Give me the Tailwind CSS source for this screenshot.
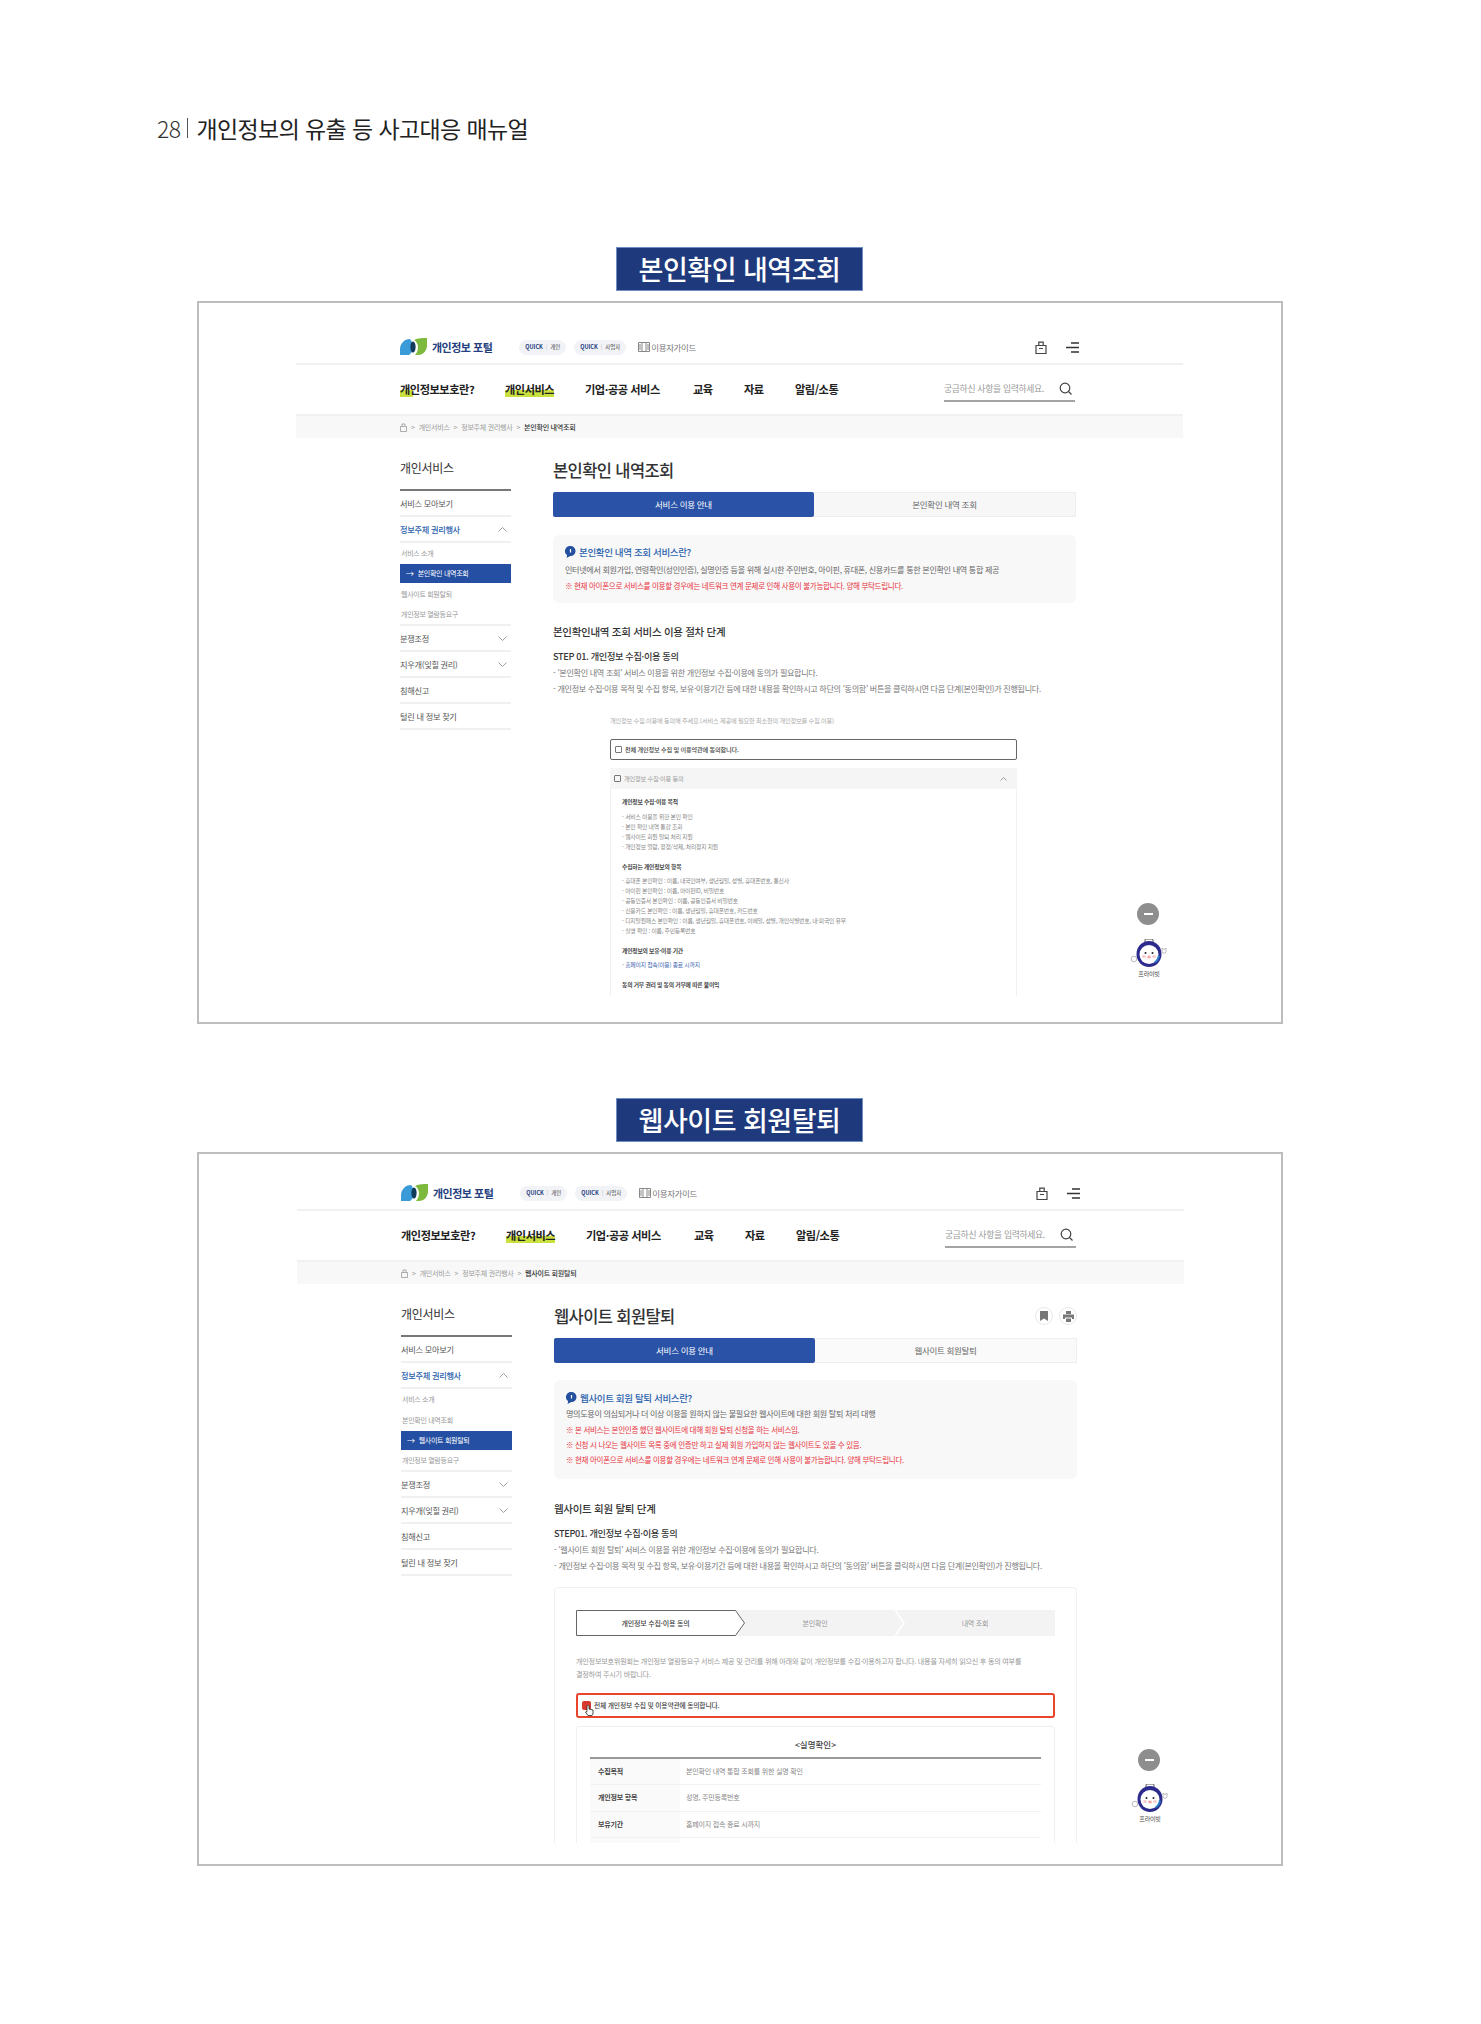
<!DOCTYPE html>
<html lang="ko">
<head>
<meta charset="UTF-8">
<meta name="viewport" content="width=device-width, initial-scale=1.0">
<title>개인정보의 유출 등 사고대응 매뉴얼</title>
<script src="https://cdn.jsdelivr.net/npm/@tailwindcss/browser@4"></script>
</head>
<body class="bg-white font-['Noto_Sans_CJK_KR','Noto_Sans',sans-serif] text-[#333]">
<div class="w-[1481px] h-[2024px] overflow-hidden">

  <!-- page heading -->
  <div class="h-[247px] pl-[157px] pt-[112px]">
    <p class="flex items-center h-[32px] text-[23px] tracking-[-0.6px] text-[#222]"><span class="font-light text-[#333]">28</span><span class="w-px h-[20px] bg-[#555] ml-[7px] mr-[8px]"></span><span>개인정보의 유출 등 사고대응 매뉴얼</span></p>
  </div>

  <!-- section 1 -->
  <div class="ml-[616px] w-[247px] h-[44px] flex items-center justify-center bg-[#1f3a7c] border border-[#6f8fc4] text-white text-[27px] font-medium tracking-[-0.5px]">본인확인 내역조회</div>
  <div class="relative mt-[10px] ml-[197px] w-[1086px] h-[723px] border-2 border-[#bdbdbd] overflow-hidden">
    <div class="ml-[97px] w-[887px]">
      <!-- top bar -->
      <div class="h-[62px] pt-[32px] pl-[104px] pr-[104px] border-b-2 border-[#f1f1f1]">
        <div class="flex items-center h-[24px]">
          <svg class="w-[27px] h-[18px]" viewBox="0 0 27 18"><path d="M10 1C4 1 0 6 0 11v6h9c3-2 4-5 4-8s-1-6-3-8z" fill="#3a9bd8"/><path d="M27 0v7c0 6-4 10-9 10h-3c2-2 3-5 3-8 0-3-2-6-4-7 4-2 9-2 13-2z" fill="#7cb93c"/><ellipse cx="13" cy="9" rx="2.600" ry="5.500" fill="#123a5a"/></svg>
          <span class="ml-[5px] text-[11px] font-bold tracking-[-0.5px] text-[#24407e]">개인정보 포털</span>
          <span class="ml-[27px] flex items-center justify-center w-[47px] h-[15px] rounded-full bg-[#f2f3f6] text-[5.5px] text-[#444]"><b class="text-[#24407e]">QUICK</b><span class="mx-[3px] text-[#bbb]">|</span>개인</span>
          <span class="ml-[8px] flex items-center justify-center w-[52px] h-[15px] rounded-full bg-[#f2f3f6] text-[5.5px] text-[#444]"><b class="text-[#24407e]">QUICK</b><span class="mx-[3px] text-[#bbb]">|</span>사업자</span>
          <svg class="ml-[12px] w-[12px] h-[10px]" viewBox="0 0 12 10" fill="none" stroke="#888" stroke-width="1"><path d="M.5.5h11v9H.5zM4 .5v9M8 .5v9M1 3h2M1 5h2M1 7h2M9 3h2M9 5h2M9 7h2"/></svg>
          <span class="ml-px text-[8.5px] tracking-[-0.4px] text-[#777]">이용자가이드</span>
          <svg class="ml-auto w-[12px] h-[13px]" viewBox="0 0 12 13" fill="none" stroke="#444" stroke-width="1.2"><path d="M1 4.500h10v8H1zM3.800 4.500V1.200h4.400v3.300M4 7.500h4"/></svg>
          <svg class="ml-[19px] w-[13px] h-[11px]" viewBox="0 0 13 11" fill="none" stroke="#333" stroke-width="1.3"><path d="M5 1h8M0 5.500h13M5 10h8"/></svg>
        </div>
      </div>
      <!-- main nav -->
      <div class="h-[49px] pl-[104px] pr-[108px] flex items-center text-[11.2px] font-bold tracking-[-0.45px] text-[#222]">
        <span class="w-[105px]"><span class="bg-[linear-gradient(90deg,#c9e03e_13px,transparent_13px)] bg-[length:100%_45%] bg-bottom bg-no-repeat">개인정보보호란?</span></span>
        <span class="w-[80px]"><span class="bg-[linear-gradient(#c9e03e,#c9e03e)] bg-[length:100%_45%] bg-bottom bg-no-repeat">개인서비스</span></span>
        <span class="w-[108px]">기업·공공 서비스</span>
        <span class="w-[51px]">교육</span>
        <span class="w-[51px]">자료</span>
        <span>알림/소통</span>
        <div class="ml-auto w-[131px] h-[25px] flex items-center border-b-2 border-[#a3a3a3]">
          <span class="text-[8.8px] font-normal tracking-[-0.3px] text-[#999]">궁금하신 사항을 입력하세요.</span>
          <svg class="ml-auto mr-[3px] w-[13px] h-[13px]" viewBox="0 0 13 13" fill="none" stroke="#444" stroke-width="1.2"><circle cx="6" cy="6" r="4.800"/><path d="M9.500 9.500l3 3"/></svg>
        </div>
      </div>
      <!-- breadcrumb -->
      <div class="h-[24px] pl-[104px] flex items-center bg-[#f8f8f8] border-t-2 border-[#f1f1f1] text-[7px] tracking-[-0.25px] text-[#999]">
        <svg class="w-[7px] h-[9px]" viewBox="0 0 7 9" fill="none" stroke="#999" stroke-width=".8"><path d="M.5 3.500h6v5h-6zM2 3.500V1h3v2.500"/></svg>
        <span class="mx-[4px]">&gt;</span><span>개인서비스</span><span class="mx-[4px]">&gt;</span><span>정보주체 권리행사</span><span class="mx-[4px]">&gt;</span><b class="font-medium text-[#333]">본인확인 내역조회</b>
      </div>
      <!-- body -->
      <div class="h-[558px] pl-[104px] flex overflow-hidden">
        <aside class="w-[111px] shrink-0 text-[8.2px] tracking-[-0.3px] text-[#555]">
          <div class="h-[53px] pt-[21px] border-b-2 border-[#777]"><p class="h-[18px] leading-[18px] text-[12px] text-[#333]">개인서비스</p></div>
          <div class="h-[26px] flex items-center border-b-2 border-[#f0f0f0]">서비스 모아보기</div>
          <div class="h-[26px] flex items-center justify-between border-b-2 border-[#f0f0f0] font-medium text-[#2b62ad]">정보주체 권리행사<svg class="mr-[4px] w-[9px] h-[5px]" viewBox="0 0 9 5" fill="none" stroke="#888" stroke-width=".8"><path d="M.5 4.500l4-4 4 4"/></svg></div>
          <div class="pl-px border-b-2 border-[#f0f0f0] text-[7px] text-[#999]">
            <div class="h-[21px] flex items-center">서비스 소개</div>
            <div class="-ml-px h-[19px] flex items-center pl-[6px] gap-[4px] bg-[#244fa2] text-white"><span class="text-[8px]">→</span>본인확인 내역조회</div>
            <div class="h-[22px] flex items-center">웹사이트 회원탈퇴</div>
            <div class="h-[19px] flex items-center">개인정보 열람등요구</div>
          </div>
          <div class="h-[26px] flex items-center justify-between border-b-2 border-[#f0f0f0]">분쟁조정<svg class="mr-[4px] w-[9px] h-[5px]" viewBox="0 0 9 5" fill="none" stroke="#888" stroke-width=".8"><path d="M.5.5l4 4 4-4"/></svg></div>
          <div class="h-[26px] flex items-center justify-between border-b-2 border-[#f0f0f0]">지우개(잊힐 권리)<svg class="mr-[4px] w-[9px] h-[5px]" viewBox="0 0 9 5" fill="none" stroke="#888" stroke-width=".8"><path d="M.5.5l4 4 4-4"/></svg></div>
          <div class="h-[26px] flex items-center border-b-2 border-[#f0f0f0]">침해신고</div>
          <div class="h-[26px] flex items-center border-b-2 border-[#f0f0f0]">털린 내 정보 찾기</div>
        </aside>
        <main class="ml-[42px] w-[523px] shrink-0">
          <h1 class="h-[54px] pt-[20px] leading-[24px] text-[16.5px] font-medium tracking-[-0.6px] text-[#333]">본인확인 내역조회</h1>
          <div class="flex h-[25px] text-[8.5px] tracking-[-0.3px]">
            <div class="w-[261px] flex items-center justify-center rounded-[2px] bg-[#2a53a8] text-white">서비스 이용 안내</div>
            <div class="flex-1 flex items-center justify-center bg-[#f7f7f7] border-y border-r border-[#eee] text-[#666]">본인확인 내역 조회</div>
          </div>
          <div class="mt-[18px] h-[68px] pt-[10px] pl-[12px] rounded-[6px] bg-[#f8f8f8]">
            <p class="flex items-center h-[14px] text-[9.5px] font-medium tracking-[-0.35px] text-[#2b62ad]"><svg class="mr-[3px] w-[11px] h-[12px]" viewBox="0 0 11 12"><path d="M5.500 0a5 5 0 015 5c0 3-2.500 5-5 5-1 0-2 1-4 2 .5-1 .5-2 .5-3A5 5 0 015.500 0z" fill="#24509f"/><path d="M5.500 3v3.500" stroke="#fff" stroke-width="1.200"/></svg>본인확인 내역 조회 서비스란?</p>
            <p class="mt-[3px] h-[16px] leading-[16px] text-[8.1px] tracking-[-0.34px] text-[#666]">인터넷에서 회원가입, 연령확인(성인인증), 실명인증 등을 위해 실시한 주민번호, 아이핀, 휴대폰, 신용카드를 통한 본인확인 내역 통합 제공</p>
            <p class="h-[16px] leading-[16px] text-[7.5px] tracking-[-0.3px] text-[#e8323c]">※ 현재 아이폰으로 서비스를 이용할 경우에는 네트워크 연계 문제로 인해 사용이 불가능합니다. 양해 부탁드립니다.</p>
          </div>
          <h2 class="mt-[21px] h-[16px] leading-[16px] text-[10.5px] font-medium tracking-[-0.3px] text-[#333]">본인확인내역 조회 서비스 이용 절차 단계</h2>
          <h3 class="mt-[8px] h-[16px] leading-[16px] text-[9.2px] font-medium tracking-[-0.35px] text-[#333]">STEP 01. 개인정보 수집·이용 동의</h3>
          <p class="mt-px h-[16px] leading-[16px] text-[8.1px] tracking-[-0.33px] text-[#777]">- '본인확인 내역 조회' 서비스 이용을 위한 개인정보 수집·이용에 동의가 필요합니다.</p>
          <p class="h-[16px] leading-[16px] text-[8.1px] tracking-[-0.33px] whitespace-nowrap text-[#777]">- 개인정보 수집·이용 목적 및 수집 항목, 보유·이용기간 등에 대한 내용을 확인하시고 하단의 '동의함' 버튼을 클릭하시면 다음 단계(본인확인)가 진행됩니다.</p>
          <div class="ml-[57px] w-[407px]">
            <p class="mt-[17px] h-[14px] leading-[14px] text-[6.2px] tracking-[-0.2px] text-[#aaa]">개인정보 수집.이용에 동의해 주세요.(서비스 제공에 필요한 최소한의 개인정보를 수집.이용)</p>
            <div class="mt-[11px] h-[21px] flex items-center px-[4px] gap-[3px] border border-[#666] rounded-[2px] text-[6.2px] font-medium tracking-[-0.2px] text-[#444]"><span class="w-[7px] h-[7px] border border-[#777] rounded-[1px]"></span>전체 개인정보 수집 및 이용약관에 동의합니다.</div>
            <div class="mt-[8px] h-[21px] flex items-center px-[4px] gap-[3px] bg-[#f5f5f5] text-[6.2px] tracking-[-0.2px] text-[#999]"><span class="w-[7px] h-[7px] border border-[#777] rounded-[1px]"></span>개인정보 수집·이용 동의<svg class="ml-auto mr-[6px] w-[7px] h-[4px]" viewBox="0 0 7 4" fill="none" stroke="#888" stroke-width=".8"><path d="M.5 3.500l3-3 3 3"/></svg></div>
            <div class="h-[220px] px-[11px] pt-[8px] border-x border-[#f0f0f0] text-[5.8px] leading-[10px] tracking-[-0.2px] text-[#888]">
              <p class="font-bold text-[#444]">개인정보 수집·이용 목적</p>
              <ul class="mt-[5px]"><li>- 서비스 이용을 위한 본인 확인</li><li>- 본인 확인 내역 통합 조회</li><li>- 웹사이트 회원 탈퇴 처리 지원</li><li>- 개인정보 열람, 정정/삭제, 처리정지 지원</li></ul>
              <p class="mt-[10px] font-bold text-[#444]">수집하는 개인정보의 항목</p>
              <ul class="mt-[4px]"><li>- 휴대폰 본인확인 : 이름, 내국인여부, 생년월일, 성별, 휴대폰번호, 통신사</li><li>- 아이핀 본인확인 : 이름, 아이핀ID, 비밀번호</li><li>- 공동인증서 본인확인 : 이름, 공동인증서 비밀번호</li><li>- 신용카드 본인확인 : 이름, 생년월일, 휴대폰번호, 카드번호</li><li>- 디지털원패스 본인확인 : 이름, 생년월일, 휴대폰번호, 이메일, 성별, 개인식별번호, 내·외국인 유무</li><li>- 실명 확인 : 이름, 주민등록번호</li></ul>
              <p class="mt-[10px] font-bold text-[#444]">개인정보의 보유·이용 기간</p>
              <p class="mt-[4px] text-[#3a5fae]">- 홈페이지 접속(이용) 종료 시까지</p>
              <p class="mt-[10px] font-bold text-[#444]">동의 거부 권리 및 동의 거부에 따른 불이익</p>
            </div>
          </div>
        </main>
      </div>
    </div>
    <!-- floating widgets -->
    <div class="absolute left-[938px] top-[600px] w-[22px] h-[22px] rounded-full bg-[#8e8e8e] flex items-center justify-center"><span class="w-[9px] h-[2px] bg-white"></span></div>
    <div class="absolute left-[930px] top-[636px] w-[40px] flex flex-col items-center">
      <svg class="w-[38px] h-[29px]" viewBox="0 0 38 29"><rect x="15" y="0" width="8" height="4" rx="1" fill="none" stroke="#555" stroke-width="1"/><ellipse cx="19" cy="15" rx="12.500" ry="13" fill="#2c2a8c"/><circle cx="19" cy="15.500" r="9.500" fill="#fff"/><path d="M25 24a9 9 0 005-7l-2-1a10 10 0 01-4 7z" fill="#2a78c8"/><circle cx="15.500" cy="14" r="1" fill="#222"/><circle cx="22.500" cy="14" r="1" fill="#222"/><ellipse cx="14" cy="17.500" rx="2" ry="1.300" fill="#f9c6c6"/><ellipse cx="24" cy="17.500" rx="2" ry="1.300" fill="#f9c6c6"/><ellipse cx="19" cy="18" rx="1.800" ry="1.400" fill="#f5a5a5"/><circle cx="4" cy="20" r="2.800" fill="#fff" stroke="#aaa" stroke-width=".8"/><path d="M32 9l1 1.200h2l1-1.200v4a2.200 2.200 0 01-4 0z" fill="#fff" stroke="#aaa" stroke-width=".8"/></svg>
      <span class="text-[6px] leading-[12px] tracking-[-0.2px] text-[#444]">프라이빗</span>
    </div>
  </div>

  <!-- section 2 -->
  <div class="mt-[74px] ml-[616px] w-[247px] h-[44px] flex items-center justify-center bg-[#1f3a7c] border border-[#6f8fc4] text-white text-[27px] font-medium tracking-[-0.5px]">웹사이트 회원탈퇴</div>
  <div class="relative mt-[10px] ml-[197px] w-[1086px] h-[714px] border-2 border-[#bdbdbd] overflow-hidden">
    <div class="ml-[98px] w-[887px]">
      <div class="h-[57px] pt-[27px] pl-[104px] pr-[104px] border-b-2 border-[#f1f1f1]">
        <div class="flex items-center h-[24px]">
          <svg class="w-[27px] h-[18px]" viewBox="0 0 27 18"><path d="M10 1C4 1 0 6 0 11v6h9c3-2 4-5 4-8s-1-6-3-8z" fill="#3a9bd8"/><path d="M27 0v7c0 6-4 10-9 10h-3c2-2 3-5 3-8 0-3-2-6-4-7 4-2 9-2 13-2z" fill="#7cb93c"/><ellipse cx="13" cy="9" rx="2.600" ry="5.500" fill="#123a5a"/></svg>
          <span class="ml-[5px] text-[11px] font-bold tracking-[-0.5px] text-[#24407e]">개인정보 포털</span>
          <span class="ml-[27px] flex items-center justify-center w-[47px] h-[15px] rounded-full bg-[#f2f3f6] text-[5.5px] text-[#444]"><b class="text-[#24407e]">QUICK</b><span class="mx-[3px] text-[#bbb]">|</span>개인</span>
          <span class="ml-[8px] flex items-center justify-center w-[52px] h-[15px] rounded-full bg-[#f2f3f6] text-[5.5px] text-[#444]"><b class="text-[#24407e]">QUICK</b><span class="mx-[3px] text-[#bbb]">|</span>사업자</span>
          <svg class="ml-[12px] w-[12px] h-[10px]" viewBox="0 0 12 10" fill="none" stroke="#888" stroke-width="1"><path d="M.5.5h11v9H.5zM4 .5v9M8 .5v9M1 3h2M1 5h2M1 7h2M9 3h2M9 5h2M9 7h2"/></svg>
          <span class="ml-px text-[8.5px] tracking-[-0.4px] text-[#777]">이용자가이드</span>
          <svg class="ml-auto w-[12px] h-[13px]" viewBox="0 0 12 13" fill="none" stroke="#444" stroke-width="1.2"><path d="M1 4.500h10v8H1zM3.800 4.500V1.200h4.400v3.300M4 7.500h4"/></svg>
          <svg class="ml-[19px] w-[13px] h-[11px]" viewBox="0 0 13 11" fill="none" stroke="#333" stroke-width="1.3"><path d="M5 1h8M0 5.500h13M5 10h8"/></svg>
        </div>
      </div>
      <div class="h-[49px] pl-[104px] pr-[108px] flex items-center text-[11.2px] font-bold tracking-[-0.45px] text-[#222]">
        <span class="w-[105px]">개인정보보호란?</span>
        <span class="w-[80px]"><span class="bg-[linear-gradient(#c9e03e,#c9e03e)] bg-[length:100%_45%] bg-bottom bg-no-repeat">개인서비스</span></span>
        <span class="w-[108px]">기업·공공 서비스</span>
        <span class="w-[51px]">교육</span>
        <span class="w-[51px]">자료</span>
        <span>알림/소통</span>
        <div class="ml-auto w-[131px] h-[25px] flex items-center border-b-2 border-[#a3a3a3]">
          <span class="text-[8.8px] font-normal tracking-[-0.3px] text-[#999]">궁금하신 사항을 입력하세요.</span>
          <svg class="ml-auto mr-[3px] w-[13px] h-[13px]" viewBox="0 0 13 13" fill="none" stroke="#444" stroke-width="1.2"><circle cx="6" cy="6" r="4.800"/><path d="M9.500 9.500l3 3"/></svg>
        </div>
      </div>
      <div class="h-[24px] pl-[104px] flex items-center bg-[#f8f8f8] border-t-2 border-[#f1f1f1] text-[7px] tracking-[-0.25px] text-[#999]">
        <svg class="w-[7px] h-[9px]" viewBox="0 0 7 9" fill="none" stroke="#999" stroke-width=".8"><path d="M.5 3.500h6v5h-6zM2 3.500V1h3v2.500"/></svg>
        <span class="mx-[4px]">&gt;</span><span>개인서비스</span><span class="mx-[4px]">&gt;</span><span>정보주체 권리행사</span><span class="mx-[4px]">&gt;</span><b class="font-medium text-[#333]">웹사이트 회원탈퇴</b>
      </div>
      <div class="h-[559px] pl-[104px] flex overflow-hidden">
        <aside class="w-[111px] shrink-0 text-[8.2px] tracking-[-0.3px] text-[#555]">
          <div class="h-[53px] pt-[21px] border-b-2 border-[#777]"><p class="h-[18px] leading-[18px] text-[12px] text-[#333]">개인서비스</p></div>
          <div class="h-[26px] flex items-center border-b-2 border-[#f0f0f0]">서비스 모아보기</div>
          <div class="h-[26px] flex items-center justify-between border-b-2 border-[#f0f0f0] font-medium text-[#2b62ad]">정보주체 권리행사<svg class="mr-[4px] w-[9px] h-[5px]" viewBox="0 0 9 5" fill="none" stroke="#888" stroke-width=".8"><path d="M.5 4.500l4-4 4 4"/></svg></div>
          <div class="pl-px border-b-2 border-[#f0f0f0] text-[7px] text-[#999]">
            <div class="h-[21px] flex items-center">서비스 소개</div>
            <div class="h-[21px] flex items-center">본인확인 내역조회</div>
            <div class="-ml-px h-[19px] flex items-center pl-[6px] gap-[4px] bg-[#244fa2] text-white"><span class="text-[8px]">→</span>웹사이트 회원탈퇴</div>
            <div class="h-[20px] flex items-center">개인정보 열람등요구</div>
          </div>
          <div class="h-[26px] flex items-center justify-between border-b-2 border-[#f0f0f0]">분쟁조정<svg class="mr-[4px] w-[9px] h-[5px]" viewBox="0 0 9 5" fill="none" stroke="#888" stroke-width=".8"><path d="M.5.5l4 4 4-4"/></svg></div>
          <div class="h-[26px] flex items-center justify-between border-b-2 border-[#f0f0f0]">지우개(잊힐 권리)<svg class="mr-[4px] w-[9px] h-[5px]" viewBox="0 0 9 5" fill="none" stroke="#888" stroke-width=".8"><path d="M.5.5l4 4 4-4"/></svg></div>
          <div class="h-[26px] flex items-center border-b-2 border-[#f0f0f0]">침해신고</div>
          <div class="h-[26px] flex items-center border-b-2 border-[#f0f0f0]">털린 내 정보 찾기</div>
        </aside>
        <main class="ml-[42px] w-[523px] shrink-0">
          <div class="h-[54px] pt-[20px] flex items-start">
            <h1 class="leading-[24px] text-[16.5px] font-medium tracking-[-0.6px] text-[#333]">웹사이트 회원탈퇴</h1>
            <span class="ml-auto mt-[3px] w-[18px] h-[18px] rounded-full border border-[#e8e8e8] flex items-center justify-center"><svg class="w-[8px] h-[10px]" viewBox="0 0 8 10"><path d="M0 0h8v10L4 7.500 0 10z" fill="#777"/></svg></span>
            <span class="ml-[6px] mt-[3px] w-[18px] h-[18px] rounded-full border border-[#e8e8e8] flex items-center justify-center"><svg class="w-[11px] h-[11px]" viewBox="0 0 11 11"><path d="M3 0h5v3H3zM0 3.500h11v4.500H9V6.500H2V8H0zM3 7.500h5V11H3z" fill="#777"/></svg></span>
          </div>
          <div class="flex h-[25px] text-[8.5px] tracking-[-0.3px]">
            <div class="w-[261px] flex items-center justify-center rounded-[2px] bg-[#2a53a8] text-white">서비스 이용 안내</div>
            <div class="flex-1 flex items-center justify-center bg-[#fafafa] border-y border-r border-[#eee] text-[#666]">웹사이트 회원탈퇴</div>
          </div>
          <div class="mt-[17px] h-[99px] pt-[11px] pl-[12px] rounded-[6px] bg-[#f8f8f8]">
            <p class="flex items-center h-[14px] text-[9.5px] font-medium tracking-[-0.35px] text-[#2b62ad]"><svg class="mr-[3px] w-[11px] h-[12px]" viewBox="0 0 11 12"><path d="M5.500 0a5 5 0 015 5c0 3-2.500 5-5 5-1 0-2 1-4 2 .5-1 .5-2 .5-3A5 5 0 015.500 0z" fill="#24509f"/><path d="M5.500 3v3.500" stroke="#fff" stroke-width="1.200"/></svg>웹사이트 회원 탈퇴 서비스란?</p>
            <p class="mt-[1px] h-[16px] leading-[16px] text-[8.1px] tracking-[-0.34px] text-[#666]">명의도용이 의심되거나 더 이상 이용을 원하지 않는 불필요한 웹사이트에 대한 회원 탈퇴 처리 대행</p>
            <div class="text-[7.5px] leading-[15px] tracking-[-0.3px] text-[#e8323c]">
              <p>※ 본 서비스는 본인인증 했던 웹사이트에 대해 회원 탈퇴 신청을 하는 서비스임.</p>
              <p>※ 신청 시 나오는 웹사이트 목록 중에 인증만 하고 실제 회원 가입하지 않는 웹사이트도 있을 수 있음.</p>
              <p>※ 현재 아이폰으로 서비스를 이용할 경우에는 네트워크 연계 문제로 인해 사용이 불가능합니다. 양해 부탁드립니다.</p>
            </div>
          </div>
          <h2 class="mt-[22px] h-[16px] leading-[16px] text-[10.5px] font-medium tracking-[-0.3px] text-[#333]">웹사이트 회원 탈퇴 단계</h2>
          <h3 class="mt-[8px] h-[16px] leading-[16px] text-[9.2px] font-medium tracking-[-0.35px] text-[#333]">STEP01. 개인정보 수집·이용 동의</h3>
          <p class="mt-px h-[16px] leading-[16px] text-[8.1px] tracking-[-0.33px] text-[#777]">- '웹사이트 회원 탈퇴' 서비스 이용을 위한 개인정보 수집·이용에 동의가 필요합니다.</p>
          <p class="h-[16px] leading-[16px] text-[8.1px] tracking-[-0.33px] whitespace-nowrap text-[#777]">- 개인정보 수집·이용 목적 및 수집 항목, 보유·이용기간 등에 대한 내용을 확인하시고 하단의 '동의함' 버튼을 클릭하시면 다음 단계(본인확인)가 진행됩니다.</p>
          <div class="mt-[13px] h-[300px] px-[21px] pt-[22px] border border-[#f0f0f0] rounded-[4px]">
            <!-- step indicator -->
            <div class="relative h-[26px] flex text-[7px] tracking-[-0.2px] text-[#999]">
              <svg class="absolute inset-0 w-[479px] h-[26px]" viewBox="0 0 479 26"><path d="M0 0h479v26H0z" fill="#f3f3f3"/><path d="M.5.5h159l9 12.500-9 12.500H.5z" fill="#fff" stroke="#666"/><path d="M319 0l9 13-9 13" fill="none" stroke="#fff" stroke-width="1.500"/></svg>
              <span class="relative w-[159px] flex items-center justify-center font-medium text-[#444]">개인정보 수집·이용 동의</span>
              <span class="relative w-[160px] flex items-center justify-center">본인확인</span>
              <span class="relative flex-1 flex items-center justify-center">내역 조회</span>
            </div>
            <p class="mt-[19px] w-[470px] break-keep text-[7.1px] leading-[12.500px] tracking-[-0.22px] text-[#999]">개인정보보호위원회는 개인정보 열람등요구 서비스 제공 및 관리를 위해 아래와 같이 개인정보를 수집·이용하고자 합니다. 내용을 자세히 읽으신 후 동의 여부를 결정하여 주시기 바랍니다.</p>
            <div class="relative mt-[13px] h-[25px] flex items-center pl-[16px] border-2 border-[#e8452c] rounded-[3px] text-[6.8px] font-medium tracking-[-0.2px] text-[#444]">
              <span class="absolute left-[4px] top-[6px] w-[9px] h-[9px] rounded-[2px] bg-[#d9382c]"></span>
              <svg class="absolute left-[7px] top-[10px] w-[9px] h-[11px]" viewBox="0 0 9 11"><path d="M2 1a1 1 0 012 0v3l4 1v4l-1 1.500H3L.5 7l1.500-.5z" fill="#fff" stroke="#222" stroke-width=".8"/></svg>
              전체 개인정보 수집 및 이용약관에 동의합니다.
            </div>
            <div class="mt-[8px] h-[200px] px-[13px] pt-[10px] border border-[#f0f0f0] rounded-[3px]">
              <p class="h-[14px] leading-[14px] text-center text-[8.500px] font-medium text-[#444]">&lt;실명확인&gt;</p>
              <table class="mt-[6px] w-full border-t-2 border-[#999] text-[7px] tracking-[-0.2px] text-[#888]">
                <tbody>
                  <tr class="h-[26px] border-b border-[#f2f2f2]"><th class="w-[90px] pl-[8px] text-left font-bold bg-[#fafafa] text-[#444]">수집목적</th><td class="pl-[6px]">본인확인 내역 통합 조회를 위한 실명 확인</td></tr>
                  <tr class="h-[27px] border-b border-[#f2f2f2]"><th class="w-[90px] pl-[8px] text-left font-bold bg-[#fafafa] text-[#444]">개인정보 항목</th><td class="pl-[6px]">성명, 주민등록번호</td></tr>
                  <tr class="h-[26px] border-b border-[#f2f2f2]"><th class="w-[90px] pl-[8px] text-left font-bold bg-[#fafafa] text-[#444]">보유기간</th><td class="pl-[6px]">홈페이지 접속 종료 시까지</td></tr>
                  <tr class="h-[26px]"><th class="w-[90px] bg-[#fafafa]"></th><td></td></tr>
                </tbody>
              </table>
            </div>
          </div>
        </main>
      </div>
    </div>
    <div class="absolute left-[939px] top-[595px] w-[22px] h-[22px] rounded-full bg-[#8e8e8e] flex items-center justify-center"><span class="w-[9px] h-[2px] bg-white"></span></div>
    <div class="absolute left-[931px] top-[630px] w-[40px] flex flex-col items-center">
      <svg class="w-[38px] h-[29px]" viewBox="0 0 38 29"><rect x="15" y="0" width="8" height="4" rx="1" fill="none" stroke="#555" stroke-width="1"/><ellipse cx="19" cy="15" rx="12.500" ry="13" fill="#2c2a8c"/><circle cx="19" cy="15.500" r="9.500" fill="#fff"/><path d="M25 24a9 9 0 005-7l-2-1a10 10 0 01-4 7z" fill="#2a78c8"/><circle cx="15.500" cy="14" r="1" fill="#222"/><circle cx="22.500" cy="14" r="1" fill="#222"/><ellipse cx="14" cy="17.500" rx="2" ry="1.300" fill="#f9c6c6"/><ellipse cx="24" cy="17.500" rx="2" ry="1.300" fill="#f9c6c6"/><ellipse cx="19" cy="18" rx="1.800" ry="1.400" fill="#f5a5a5"/><circle cx="4" cy="20" r="2.800" fill="#fff" stroke="#aaa" stroke-width=".8"/><path d="M32 9l1 1.200h2l1-1.200v4a2.200 2.200 0 01-4 0z" fill="#fff" stroke="#aaa" stroke-width=".8"/></svg>
      <span class="text-[6px] leading-[12px] tracking-[-0.2px] text-[#444]">프라이빗</span>
    </div>
  </div>
</div>
</body>
</html>
